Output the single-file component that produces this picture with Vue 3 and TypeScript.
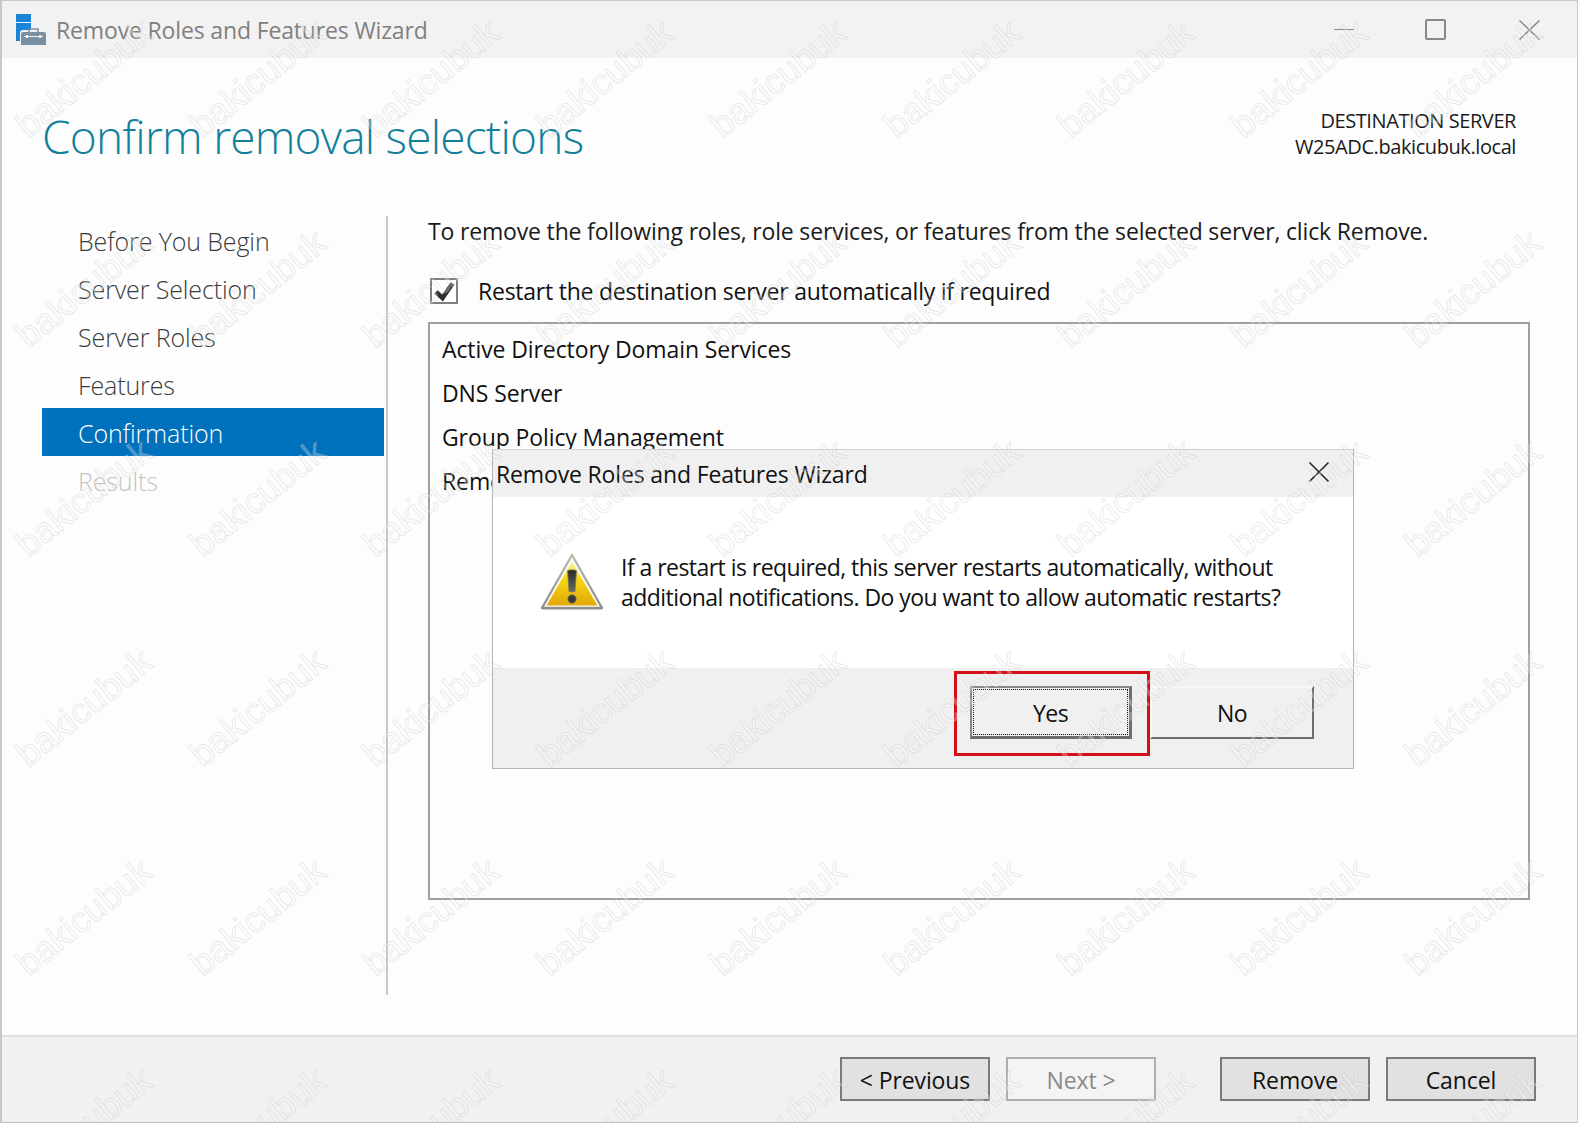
<script setup lang="ts">
const steps: { label: string; state: string }[] = [
  { label: 'Before You Begin', state: '' },
  { label: 'Server Selection', state: '' },
  { label: 'Server Roles', state: '' },
  { label: 'Features', state: '' },
  { label: 'Confirmation', state: 'active' },
  { label: 'Results', state: 'disabled' },
]
const features: string[] = [
  'Active Directory Domain Services',
  'DNS Server',
  'Group Policy Management',
  'Remote Server Administration Tools',
]
const marks: number[] = Array.from({ length: 54 }, (_, i) => i)
const ticks: number[] = [331, 404, 524, 540, 606, 620, 684, 708, 763, 788, 885, 1005, 1015, 1045]
</script>

<template>
  <div class="window">
    <header class="titlebar">
      <svg class="app-icon" width="30" height="31" viewBox="0 0 30 31">
        <rect x="0" y="0" width="15" height="27" fill="#1b84d4" />
        <rect x="0" y="8" width="15" height="1" fill="#e8f2fa" />
        <path d="M4 31V19a3 3 0 0 1 3-3h23v15z" fill="#f2f2f2" />
        <path d="M13 18v-3h9v3" fill="none" stroke="#7890a4" stroke-width="1.6" />
        <path d="M5 31V20a2 2 0 0 1 2-2h21a2 2 0 0 1 2 2v11z" fill="#7890a4" />
        <rect x="8" y="22" width="19" height="1" fill="#f4f6f8" />
        <rect x="10" y="21" width="2" height="3" fill="#f4f6f8" />
        <rect x="23" y="21" width="2" height="3" fill="#f4f6f8" />
      </svg>
      <span class="window-title">Remove Roles and Features Wizard</span>
      <div class="controls">
        <span class="ctl-min"></span>
        <span class="ctl-max"></span>
        <svg width="21" height="20" viewBox="0 0 21 20"><path d="M.5.5l20 19M20.5.5l-20 19" stroke="#888" stroke-width="1.5" fill="none" /></svg>
      </div>
    </header>

    <section class="head">
      <h1>Confirm removal selections</h1>
      <div class="destination">
        <div>DESTINATION SERVER</div>
        <div>W25ADC.bakicubuk.local</div>
      </div>
    </section>

    <main class="main">
      <nav class="nav">
        <div v-for="s in steps" :key="s.label" class="step" :class="s.state">{{ s.label }}</div>
      </nav>
      <section class="panel">
        <p class="intro">To remove the following roles, role services, or features from the selected server, click Remove.</p>
        <label class="restart">
          <span class="checkbox">
            <svg width="24" height="22" viewBox="0 0 24 22"><path d="M4 12l6.500 6L20.500 3.500" fill="none" stroke="#2f2f2f" stroke-width="4.6" /></svg>
          </span>
          <span>Restart the destination server automatically if required</span>
        </label>
        <div class="listbox">
          <div v-for="f in features" :key="f" class="feature">{{ f }}</div>
        </div>
      </section>
    </main>

    <footer class="footer">
      <button class="btn">&lt; Previous</button>
      <button class="btn off">Next &gt;</button>
      <button class="btn gap">Remove</button>
      <button class="btn">Cancel</button>
    </footer>

    <div class="dialog">
      <div class="dlg-title">
        <span class="dlg-title-text">Remove Roles and Features Wizard</span>
        <svg width="22" height="22" viewBox="0 0 22 22"><path d="M1.5 1.5l19 19M20.5 1.5l-19 19" stroke="#222" stroke-width="1.6" fill="none" /></svg>
      </div>
      <div class="dlg-body">
        <svg class="warn" width="66" height="60" viewBox="0 0 66 60">
          <defs>
            <linearGradient id="warnFill" x1="0" y1="0" x2="0" y2="1">
              <stop offset="0" stop-color="#fdf3a0" />
              <stop offset="0.4" stop-color="#f6d814" />
              <stop offset="1" stop-color="#e2a808" />
            </linearGradient>
            <linearGradient id="warnEdge" x1="0" y1="0" x2="0" y2="1">
              <stop offset="0" stop-color="#bcbcae" />
              <stop offset="1" stop-color="#8f8f88" />
            </linearGradient>
            <linearGradient id="warnBang" x1="0" y1="0" x2="0" y2="1">
              <stop offset="0" stop-color="#2a2a26" />
              <stop offset="1" stop-color="#6a6a60" />
            </linearGradient>
          </defs>
          <path d="M33 3L3 56h60z" fill="#000" opacity="0.12" transform="translate(0 2)" />
          <path d="M33 3L3 56h60z" fill="#fff" stroke="url(#warnEdge)" stroke-width="2.4" stroke-linejoin="round" />
          <path d="M33 9.5L7.5 53.5h51z" fill="url(#warnFill)" />
          <path d="M28.500 18.500q4.500-1.500 9 0l-1.500 21q-3 1-6 0z" fill="url(#warnBang)" stroke="#77776a" stroke-width="0.8" />
          <circle cx="33" cy="47" r="4.200" fill="#3a3a32" stroke="#77776a" stroke-width="0.8" />
        </svg>
        <p>If a restart is required, this server restarts automatically, without<br />additional notifications. Do you want to allow automatic restarts?</p>
      </div>
      <div class="dlg-actions">
        <button class="dlg-btn yes"><span>Yes</span></button>
        <button class="dlg-btn no">No</button>
      </div>
      <div class="highlight"></div>
    </div>

    <span v-for="t in ticks" :key="t" class="tick" :style="{ top: `${t}px` }"></span>
    <div class="edge-mark"></div>

    <div class="watermarks" aria-hidden="true">
      <span v-for="m in marks" :key="m" class="mark">bakicubuk</span>
    </div>
  </div>
</template>

<style>
html, body { margin: 0; background: #fdfdfd; }
</style>

<style scoped>
.window {
  position: relative;
  width: 1578px;
  height: 1123px;
  box-sizing: border-box;
  display: flex;
  flex-direction: column;
  overflow: hidden;
  background: #fdfdfd;
  border-top: 1px solid #c8c8c8;
  border-left: 2px solid #c8c8c8;
  border-right: 1px solid #c8c8c8;
  border-bottom: 1px solid #bcbcbc;
  font-family: "Open Sans", "Noto Sans", sans-serif;
  color: #111;
}
.titlebar {
  height: 57px;
  flex: none;
  display: flex;
  align-items: center;
  background: #f2f2f2;
  padding-left: 14px;
}
.app-icon { flex: none; }
.window-title {
  margin-left: 10px;
  font-size: 23px;
  letter-spacing: -0.15px;
  color: #808080;
}
.controls {
  margin-left: auto;
  display: flex;
  align-items: center;
  padding-right: 37px;
}
.ctl-min { width: 20px; height: 1px; background: #888; margin-right: 71px; }
.ctl-max {
  width: 17px;
  height: 17px;
  border: 2px solid #888;
  border-radius: 2px;
  margin-right: 73px;
}
.head {
  height: 158px;
  flex: none;
  display: flex;
  justify-content: space-between;
  padding: 0 61px 0 40px;
}
h1 {
  margin: 48px 0 0;
  font-size: 46px;
  line-height: 60px;
  font-weight: 300;
  letter-spacing: -0.78px;
  color: #127f9b;
}
.destination {
  margin-top: 50px;
  text-align: right;
  font-size: 20px;
  line-height: 26px;
  letter-spacing: -0.42px;
  color: #1a1a1a;
}
.main {
  height: 779px;
  flex: none;
  display: flex;
}
.nav {
  width: 346px;
  margin-left: 40px;
  flex: none;
  box-sizing: border-box;
  border-right: 2px solid #c8c8c8;
}
.step {
  height: 48px;
  line-height: 50px;
  padding-left: 36px;
  margin-right: 2px;
  font-size: 25px;
  font-weight: 300;
  letter-spacing: -0.12px;
  color: #3c3c3c;
}
.step.active { background: #0071bc; color: #fff; }
.step.disabled { color: #c4c4c4; }
.panel {
  width: 1102px;
  margin-left: 40px;
  flex: none;
}
.intro {
  margin: -1px 0 0;
  font-size: 23px;
  line-height: 32px;
  letter-spacing: -0.17px;
  color: #1a1a1a;
}
.restart {
  margin-top: 28px;
  display: flex;
  align-items: center;
  font-size: 23px;
  line-height: 32px;
  letter-spacing: -0.24px;
  color: #111;
}
.checkbox {
  width: 24px;
  height: 22px;
  margin: 0 20px 0 2px;
  border: 2px solid #808080;
  display: flex;
  align-items: center;
  justify-content: center;
  background: #fff;
}
.listbox {
  margin-top: 15px;
  height: 578px;
  box-sizing: border-box;
  border: 2px solid #a0a0a0;
  padding: 3px 12px;
  font-size: 23px;
  letter-spacing: -0.1px;
}
.feature {
  height: 44px;
  line-height: 44px;
  color: #111;
}
.footer {
  flex: 1;
  display: flex;
  align-items: center;
  justify-content: flex-end;
  gap: 16px;
  box-sizing: border-box;
  margin-top: 40px;
  padding: 0 41px 1px 0;
  border-top: 2px solid #e0e0e0;
  background: #f1f1f1;
}
.btn {
  width: 150px;
  height: 44px;
  box-sizing: border-box;
  border: 2px solid #7a7a7a;
  background: #e1e1e1;
  padding: 1px 0 0;
  font-family: inherit;
  font-size: 23px;
  letter-spacing: -0.1px;
  color: #111;
}
.btn.off { background: #f4f4f4; border-color: #adadad; color: #8a8a8a; }
.btn.gap { margin-left: 48px; }
.dialog {
  position: absolute;
  left: 490px;
  top: 448px;
  width: 862px;
  height: 320px;
  box-sizing: border-box;
  display: flex;
  flex-direction: column;
  background: #fff;
  border: 1px solid #b4b4b4;
  border-top: 1px solid #d0d0d0;
}
.dlg-title {
  height: 47px;
  flex: none;
  display: flex;
  align-items: center;
  justify-content: space-between;
  padding: 0 23px 3px 3px;
  box-sizing: border-box;
  background: #f0f0f0;
  font-size: 23px;
  letter-spacing: -0.15px;
  color: #111;
}
.dlg-title-text { margin-top: 4px; }
.dlg-body {
  flex: 1;
  display: flex;
  align-items: center;
  padding: 0 0 2px 46px;
  background: #fff;
}
.dlg-body p {
  margin: 0 0 0 16px;
  font-size: 23px;
  line-height: 30px;
  letter-spacing: -0.54px;
  color: #111;
}
.warn { flex: none; }
.dlg-actions {
  position: relative;
  height: 100px;
  flex: none;
  display: flex;
  justify-content: flex-end;
  gap: 18px;
  padding: 18px 39px 0 0;
  box-sizing: border-box;
  background: #f0f0f0;
}
.dlg-btn {
  width: 162px;
  height: 53px;
  box-sizing: border-box;
  padding: 0;
  background: #f0f0f0;
  border: 2px solid #f8f8f8;
  border-right-color: #6e6e6e;
  border-bottom-color: #6e6e6e;
  font-family: inherit;
  font-size: 23px;
  letter-spacing: -0.5px;
  color: #111;
}
.dlg-btn.no { width: 164px; }
.dlg-btn.yes {
  border: 2px solid #6e6e6e;
  border-top-color: #888;
  border-left-color: #888;
  border-bottom-width: 3px;
  border-right-width: 3px;
  padding: 1px;
}
.dlg-btn.yes span {
  display: flex;
  align-items: center;
  justify-content: center;
  height: 100%;
  box-sizing: border-box;
  padding-top: 2px;
  outline: 1px dotted #111;
  outline-offset: -1px;
}
.highlight {
  position: absolute;
  left: 461px;
  top: 221px;
  width: 196px;
  height: 85px;
  box-sizing: border-box;
  border: 3px solid #d30f17;
}
.edge-mark {
  position: absolute;
  left: -2px;
  top: 157px;
  width: 2px;
  height: 125px;
  background: #4a4a4a;
}
.tick {
  position: absolute;
  left: -2px;
  width: 2px;
  height: 1px;
  background: #5d7f96;
}
.watermarks {
  position: absolute;
  left: -5px;
  top: -27px;
  display: grid;
  grid-template-columns: repeat(9, 173.6px);
  grid-auto-rows: 209.500px;
  pointer-events: none;
}
.mark {
  display: flex;
  align-items: center;
  justify-content: center;
  transform: rotate(-39deg);
  font-family: "Liberation Sans", Arial, sans-serif;
  font-size: 36px;
  color: rgba(255, 255, 255, 0.3);
  -webkit-text-stroke: 1px rgba(170, 170, 170, 0.24);
}
</style>
